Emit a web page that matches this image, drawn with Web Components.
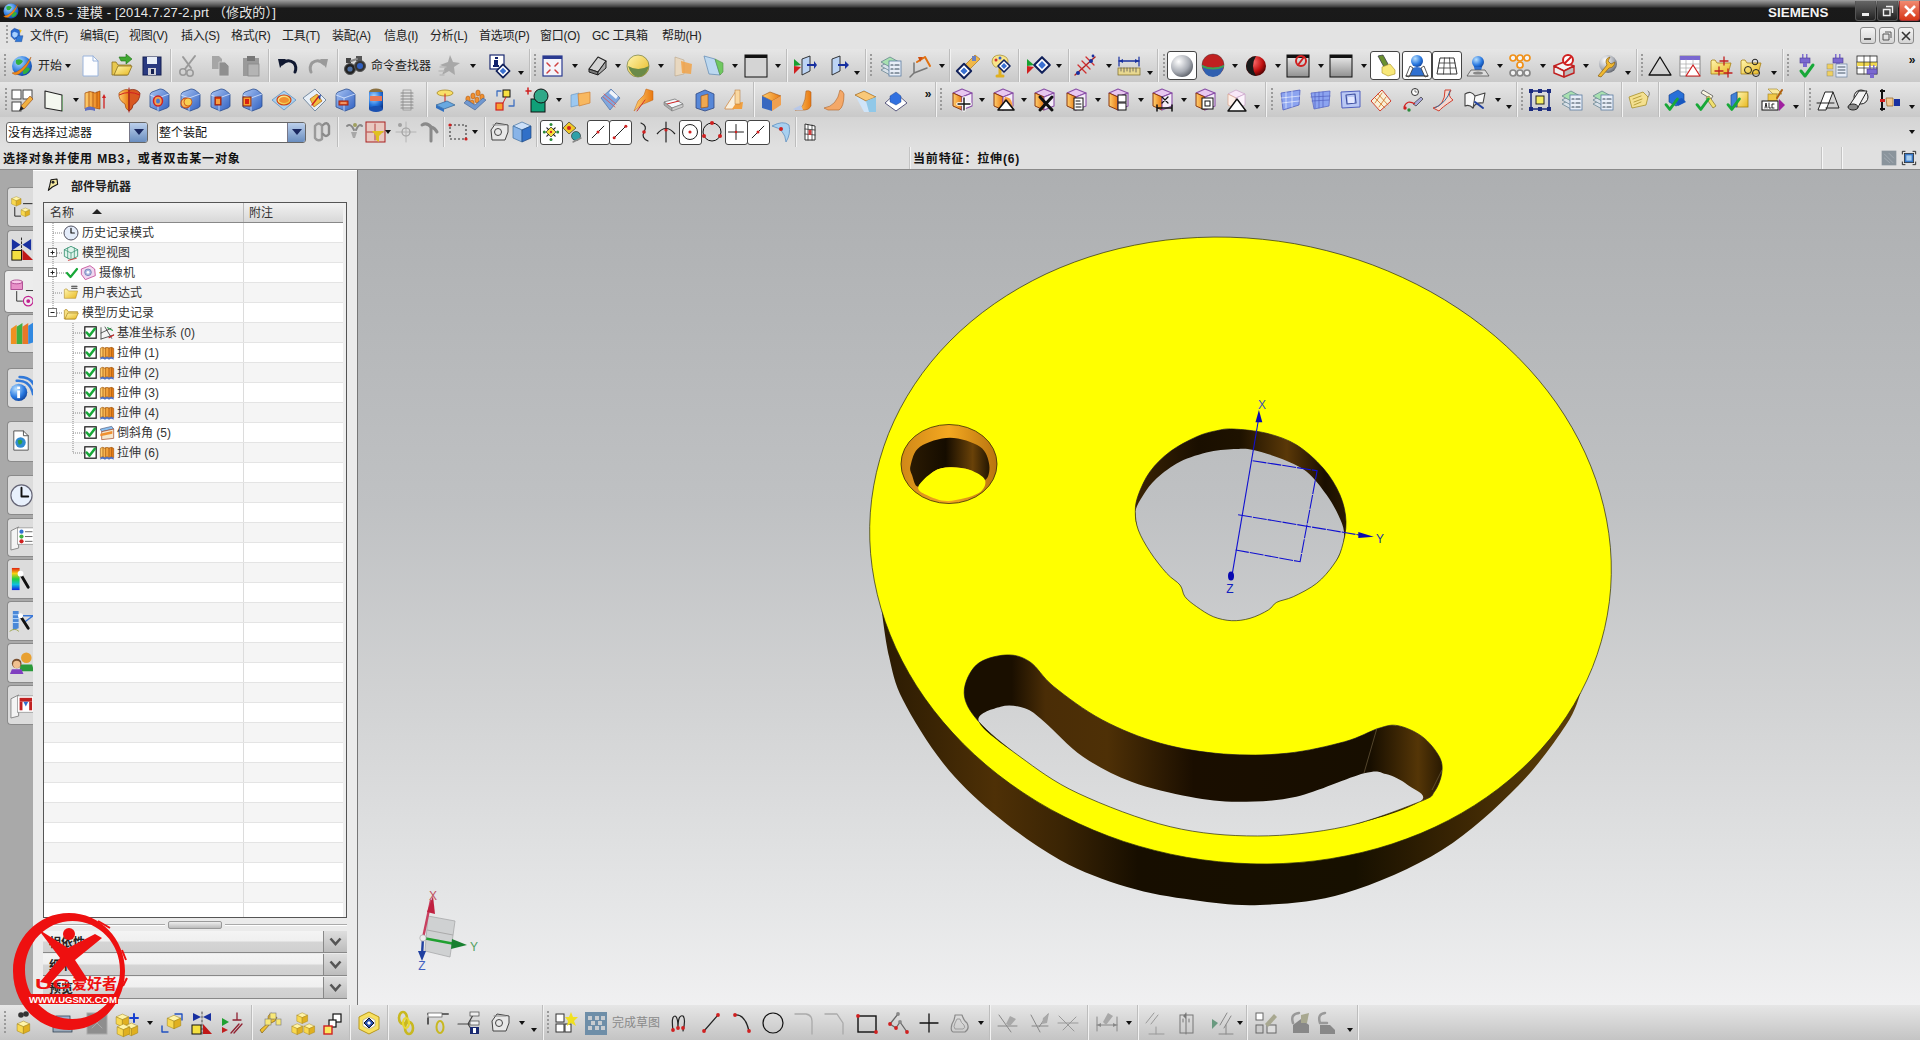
<!DOCTYPE html>
<html><head><meta charset="utf-8"><title>NX 8.5</title>
<style>html,body{margin:0;padding:0;background:#ccc;overflow:hidden}
body{font:12px "Liberation Sans","Noto Sans CJK SC",sans-serif}</style></head>
<body>
<nx-app></nx-app>
<script>
const FF='"Liberation Sans","Noto Sans CJK SC",sans-serif';
const R=(x,y,w,h,f,s='none',sw=1)=>`<rect x="${x}" y="${y}" width="${w}" height="${h}" fill="${f}" stroke="${s}" stroke-width="${sw}"/>`;
const G=(p,f,s='none',sw=1)=>`<polygon points="${p}" fill="${f}" stroke="${s}" stroke-width="${sw}" stroke-linejoin="round"/>`;
const F=(d,f,s='none',sw=1)=>`<path d="${d}" fill="${f}" stroke="${s}" stroke-width="${sw}" stroke-linejoin="round"/>`;
const L=(d,s='#000',sw=1)=>`<path d="${d}" fill="none" stroke="${s}" stroke-width="${sw}" stroke-linecap="round" stroke-linejoin="round"/>`;
const C=(x,y,r,f,s='none',sw=1)=>`<circle cx="${x}" cy="${y}" r="${r}" fill="${f}" stroke="${s}" stroke-width="${sw}"/>`;
const E=(x,y,a,b,f,s='none',sw=1)=>`<ellipse cx="${x}" cy="${y}" rx="${a}" ry="${b}" fill="${f}" stroke="${s}" stroke-width="${sw}"/>`;
const T=(x,y,k,c)=>`<g transform="translate(${x} ${y}) scale(${k})">${c}</g>`;
const DEFS=`<defs>
<linearGradient id="b" x1="0" y1="0" x2="1" y2="1"><stop offset="0" stop-color="#a8c4f4"/><stop offset="1" stop-color="#2f5fc0"/></linearGradient>
<linearGradient id="y" x1="0" y1="0" x2="1" y2="1"><stop offset="0" stop-color="#fff6b0"/><stop offset="1" stop-color="#e8b820"/></linearGradient>
<linearGradient id="o" x1="0" y1="0" x2="1" y2="0"><stop offset="0" stop-color="#ffd070"/><stop offset="1" stop-color="#e87810"/></linearGradient>
<linearGradient id="g" x1="0" y1="0" x2="0" y2="1"><stop offset="0" stop-color="#efefef"/><stop offset="1" stop-color="#909090"/></linearGradient>
<radialGradient id="s" cx=".35" cy=".3" r=".8"><stop offset="0" stop-color="#fff"/><stop offset=".6" stop-color="#a8acb4"/><stop offset="1" stop-color="#50545c"/></radialGradient>
<radialGradient id="bs" cx=".35" cy=".3" r=".8"><stop offset="0" stop-color="#b8e0ff"/><stop offset=".6" stop-color="#2878e0"/><stop offset="1" stop-color="#0c3a90"/></radialGradient>
<radialGradient id="rs" cx=".35" cy=".3" r=".8"><stop offset="0" stop-color="#ff7070"/><stop offset=".6" stop-color="#c01010"/><stop offset="1" stop-color="#300"/></radialGradient>
</defs>`;
const ycube=(x=0,y=0,k=1)=>T(x,y,k,G('12,3 21,7 12,11 3,7','#fff4a8','#a08010',.7)+G('3,7 12,11 12,21 3,17','#f8d850','#a08010',.7)+G('21,7 12,11 12,21 21,17','#e0b020','#a08010',.7));
const blue=f=>F('M3 7Q3 5 5 4L13 1Q15 1 17 2L22 6V18Q22 19 20 20L12 23Q11 23 10 22L3 19Z','url(#b)','#2c4f90',.8)+L('M3 7L11 10L22 6M11 10V23','#dbe8ff',.8)+f;
const purple=f=>G('12,1 22,5 12,9 3,5','#e8c8f0','#8a50a8',1.1)+G('3,5 12,9 12,22 3,18','url(#o)','#8a3810',1)+G('22,5 12,9 12,22 22,18','#f4ecf8','#8a50a8',1.1)+f;
const triGR='<polygon points="1,5 8,11 1,12" fill="#18a030"/><polygon points="1,12 8,13 1,20" fill="#d02020"/>';
const diam=(x,y,k=1)=>T(x,y,k,G('0,-6 6,0 0,6 -6,0','#fff','#10205a',1.6)+G('0,-3 3,0 0,3 -3,0','#3a70d0'));
const door=G('9,5 17,2 17,17 9,21','#bcd4f4','#222',.9);
const plug=(x,y)=>T(x,y,1,R(2,0,1.5,4,'#8070d0')+R(6,0,1.5,4,'#8070d0')+R(0,4,10,5,'#7a68d0','#4a3a90',.6)+R(3,9,4,4,'#7a68d0'));
const chk=(x,y,k=1)=>T(x,y,k,L('M0 6L4 11L12 0','#18a838',3));
const folder=(c='url(#y)')=>F('M2 7V20H19L22 9H8L6 6H3Z',c,'#a88018',.8);
const doc=(f='#fff',s='#7a9ad0')=>F('M5 2H15L20 7V22H5Z',f,s,1)+L('M15 2V7H20',s);
const I={
nxm:G('8,2 16,5 16,15 8,19 3,14 3,6','#2a6ad0','#103880',.6)+G('8,7 13,9 13,14 8,16 5,13 5,9','#a8d0ff')+G('13,13 21,13 19,22 9,22','#3078d8','#103880',.5)+G('15,3 19,5 17,9','#f0c020'),
start:C(12,12,10,'url(#bs)')+F('M6 6Q10 4 13 7Q11 11 8 11Q5 10 6 6ZM13 14Q18 12 20 15Q17 21 13 20Z','#30b040')+F('M2 19Q12 18 21 3Q19 13 9 20Q5 22 2 19Z','#f08818','#a04808',.4),
new:doc('#fcfdff','#9ab4dc'),
open:F('M3 8V21H18L22 11H9L7 8Z','#e8c850','#8a7020',.8)+F('M5 21L9 12H23L19 21Z','url(#y)','#8a7020',.8)+F('M10 3H17V0L23 5L17 10V7H12Z','#40a830','#207018',.6),
save:R(3,3,18,18,'#2a3a80','#141f50')+R(7,3,10,7,'#e8eef8')+R(8,14,8,7,'#d0d0d8')+R(11,15,3,5,'#141f50'),
cut:L('M18 2L8 15M6 3L14 14','#9a9a9a',2)+C(6,18,3.2,'none','#9a9a9a',1.6)+C(13,19,3.2,'none','#9a9a9a',1.6),
copy:F('M4 2H11L14 5V15H4Z','#a6a6a6')+F('M11 8H17L21 12V22H11Z','#8f8f8f','#d4d4d4',.8),
paste:R(4,4,16,18,'#9a9a9a')+R(8,2,8,5,'#777')+R(9,10,11,12,'#b4b4b4','#888',.8),
undo:L('M6 10Q12 4 18 9Q21 13 19 18','#101830',3)+G('2,5 10,5 4,14','#101830'),
redo:L('M18 10Q12 4 6 9Q3 13 5 18','#9a9a9a',3)+G('22,5 14,5 20,14','#9a9a9a'),
binoc:C(7,15,5.5,'#222','#555')+C(17,12,5.5,'#333','#555')+C(17,12,3,'#3060c0')+C(7,15,2.6,'#5070a0')+R(3,4,5,5,'#444')+R(13,2,6,5,'#555')+L('M8 7L14 5','#888',2),
find:G('13,1 16,8 23,9 17,13 18,21 12,17 5,21 8,13 3,11 11,8','#a8a8a8')+L('M3 13H9M2 17H7M3 21H7','#bbb',1.4),
info:R(2,1,14,14,'#fff','#1a2870',1.2)+R(7,3,3,2,'#10206a')+R(6,6,4,6,'#10206a')+R(5,11,6,2,'#10206a')+diam(15,17,1.1),
fit:R(3,2,19,20,'#f4f4fa','#2a3a90',1.2)+R(3,2,19,3,'#2a3a90')+L('M7 9L10 12M18 9L15 12M7 19L10 16M18 19L15 16','#d04040',1.5),
shape:F('M3 15L12 3L20 7L12 18Z','#d4d4d4','#222',1.2)+F('M3 15L12 18V21L3 18Z','#777','#222',1)+F('M12 18L20 7V14L12 21Z','#aaa','#222',1),
ball:C(10,12,11,'url(#y)','#5a6a30',.6)+F('M0 12Q10 18 21 12Q18 23 10 23Q3 22 0 12Z','#6a8a48'),
oran:G('5,3 14,6 14,20 5,22','#e8d8c0','#b8a488',.6)+G('11,7 22,10 21,20 12,19','#f2a040cc'),
pane:G('3,2 14,5 19,21 8,20','#bcd8f0','#6a90b8',.8)+G('14,5 22,9 22,18 19,21','#70c860','#509048',.6),
blk:R(1,1,22,22,'#d4d4d4','#111',1)+R(1,1,22,3,'#111'),
door1:triGR+door+G('14,10 21,10 21,7 24,11 21,15 21,12 14,12','#1830a0'),
door2:T(-3,0,1,door)+G('12,10 19,10 19,7 23,11 19,15 19,12 12,12','#1830a0'),
layers:[16,12,8].map(y=>G(`3,${y} 12,${y-5} 21,${y} 12,${y+5}`,y==8?'#a8e0b0':'#d8e0e8','#5a7a88',.7)).join('')+R(11,7,12,15,'#e8eef8','#5a7aa0',.8)+L('M13 11H15M17 11H21M13 15H15M17 15H21M13 19H15M17 19H21','#345',1.2),
wcs:L('M6 19V9M6 19L19 14M6 19L2 23','#777',1.5)+L('M9 8L17 3M17 3L22 12','#e07010',2)+F('M10 3L15 3L12 8Z','#d05010'),
wand:G('8,11 18,1 23,5 13,15','#f0b848','#a06810',.6)+R(15,2,4,5,'#6a80c0')+diam(7,17,1.2),
paint:F('M5 8Q5 1 13 1Q22 2 21 9Q20 12 16 12Q12 12 10 13Q7 14 5 8Z','#f8e488','#a08828',.7)+C(9,6,1.5,'#d03030')+C(13,4,1.5,'#3060d0')+L('M13 13V20M10 22H16','#e0b020',3)+diam(17,12,1),
tridia:triGR+diam(16,11,1.3),
hatch:L('M2 21L22 3','#b02020',1.4)+L('M5 11L13 19M9 7L17 15M13 3L21 11','#d03030',1.3)+C(5,19,2,'#1830a0')+C(18,7,2,'#1830a0')+C(20,2,1.4,'#1830a0'),
ruler:R(1,14,22,7,'#e8d890','#7a6820',.7)+L('M4 14V17M7 14V18M10 14V17M13 14V18M16 14V17M19 14V18','#555',.8)+L('M2 7H22','#1830a0',1.3)+L('M2 3V12M22 3V12','#1830a0',1.2)+G('2,7 6,5 6,9','#1830a0')+G('22,7 18,5 18,9','#1830a0'),
sphere:C(12,12,11,'url(#s)'),
redblue:C(12,11,11,'#c02020','#333',.4)+F('M1 11Q12 17 23 11Q21 23 12 23Q3 23 1 11Z','#3060b0')+F('M1 11Q12 16 23 11V13Q12 18 1 13Z','#40a050'),
redball:C(12,12,10,'url(#rs)')+F('M12 2A10 10 0 0 0 12 22Q6 12 12 2Z','#1a1a1a'),
nobox:R(1,1,22,22,'url(#g)','#111')+R(1,1,22,3,'#111')+C(15,7,5,'none','#d02020',2)+L('M12 11L18 3','#d02020',2),
gradbox:R(1,1,22,22,'url(#g)','#111')+R(1,1,22,3,'#111'),
bulb:L('M7 2L13 9','#333',1)+G('5,2 10,1 15,10 11,13','#6a9030','#334',.7)+F('M9 13L17 10L22 16V20L15 22L9 19Z','#f8e878','#a89020',.6),
person:C(12,7,6,'url(#bs)')+F('M5 22L6 15Q12 11 18 15L20 22Z','#2f70d0')+F('M1 22L5 12L8 14L4 23ZM23 22L19 12L16 14L20 23Z','#fff','#333',.8)+L('M1 22H23','#333'),
grid:G('5,4 19,4 22,20 2,20','#fff','#333',1)+L('M9.5 4L8.5 20M14.5 4L15.5 20M4 9H20M3 14H21','#333',.8),
person2:C(12,8,6,'url(#bs)')+F('M8 13H16L15 17H9Z','#2f70d0')+G('5,16 19,16 23,22 1,22','#ddd','#555',.8)+E(12,19,5,1.6,'#888'),
circles:[[5,4,'#f09018'],[12,4,'#f09018'],[19,4,'#f09018'],[12,11,'#f09018'],[5,19,'#888'],[12,19,'#888'],[19,19,'#888']].map(a=>C(a[0],a[1],3,'#f4f4f4',a[2],1.7)).join(''),
redbox:G('12,8 22,12 12,17 2,12','#f4f4f4','#c02020',1.4)+G('2,12 12,17 12,23 2,19','#eee','#c02020',1.4)+G('22,12 12,17 12,23 22,19','#bbb','#c02020',1.4)+C(16,6,5,'#fff','#d02020',2)+L('M13 9L19 3','#d02020',2),
wrenchb:C(13,10,9,'url(#s)')+F('M3 22L12 11Q9 5 15 3L13 7L16 10L20 8Q19 14 14 14L6 23Z','#f0b830','#8a6010',.7),
tri:G('12,3 23,21 1,21','none','#111',1.3),
table:R(2,2,20,20,'#fff','#666',.7)+R(2,2,20,4,'#7a68d0')+L('M2 10H22M2 14H22M2 18H22M8 6V22M15 6V22','#aaa',.7)+G('15,11 22,22 8,22','#fff','#d02020',1.2),
fplus:folder()+L('M15 3V11M11 7H19M10 13V21M6 17H14M19 15V23M15 19H23','#c02020',1.3),
fcirc:folder()+C(9,16,3.5,'none','#222')+C(17,19,3.5,'none','#222')+C(16,8,2.8,'none','#222'),
plugok:plug(6,0)+chk(7,11),
plugtree:plug(8,0)+R(2,10,6,5,'#f0d060','#887',.5)+R(2,17,6,5,'#f0d060','#887',.5)+R(11,10,11,13,'#e8eef8','#6a80a0',.7)+L('M13 13H20M13 16H20M13 19H20','#456',1),
tabplug:R(1,2,20,18,'#fff','#222',.8)+R(1,8,20,4,'#f0d850')+L('M1 8H21M1 14H21M8 2V20M14 2V20','#222',.7)+plug(11,11),
sketch:R(2,2,9,9,'#fff','#444')+R(2,14,9,9,'#fff','#444')+R(13,2,9,9,'#fff','#444')+G('11,18 20,8 23,11 14,21','#f0b040','#904010',.6)+G('9,23 11,18 14,21','#222'),
plane:G('3,3 20,7 20,23 3,20','#f4f8f0','#222',1.1)+G('20,7 21,8 21,23 20,23','#70a070'),
extrude:F('M1 5Q6 2 11 5L16 3V21L11 20Q6 18 1 21Z','url(#o)','#a04808',.7)+L('M5 4V19M9 4V19M13 4V19','#a04808',.7)+F('M1 20Q6 17 11 20V23Q6 21 1 23Z','#6070c0')+L('M20 20V9','#d02020',1.3)+G('20,6 18,10 22,10','#d02020'),
revolve:F('M2 5Q8 0 12 2V23Q8 21 8 16Q1 12 2 5Z','url(#o)','#a04808',.7)+F('M12 2Q19 0 23 5Q23 13 16 17Q16 21 12 23Z','#d85820','#802008',.7)+L('M12 0V24','#b02020',1)+F('M2 7Q12 2 23 7','none','#d02020'),
bhole:blue(E(11,13,4.5,5,'#f0a050','#d02020',1.5)+E(11,13,2,2.5,'#4a78d0')),
bboss:blue(E(8,15,5,5,'url(#o)','#c04010',1)+E(10,14,4,4,'#f8d050','#c04010',.7)),
bpock:blue(R(7,9,6,8,'#e04010','#902010')+R(8,11,4,5,'#f8a040')),
bpad:blue(R(3,9,8,9,'#f8a030','#802010')+R(5,11,4,5,'#d82010')),
emb:G('12,3 24,12 12,22 0,12','#a8d0f0','#6090c0',.8)+E(12,12,7,5,'url(#y)','#d04010',1.2)+E(12,12,5,3,'#f09030'),
offs:F('M1 10L13 1L24 12L13 23Z','#e8f0f8','#6a8098',.9)+F('M8 11L15 6L20 13L12 19Z','#f0c040','#b06010',.7)+L('M10 17L17 8','#d02020',1.4)+G('16,9 19,6 18,12','#2040a0'),
slot:blue(R(6,13,9,4,'#e05828','#a02010')+L('M8 15H13','#ffd0a0',1.2)),
cyl:E(12,4,7,3.5,'#8a7040')+R(5,4,14,17,'url(#bs)')+E(12,21,7,3,'#1a50b0')+R(6,8,12,5,'#e87858'),
spring:R(8,2,8,20,'#ddd','#888',.7)+L('M6 5H18M6 8H18M6 11H18M6 14H18M6 17H18M6 20H18','#888',1.1),
trim:E(12,5,8,3,'#f8e068','#a88820',.8)+L('M12 6V15','#d02020',1)+G('3,17 14,13 22,17 11,21','#68a8e0','#306090',.7)+G('3,17 11,21 11,24 3,20','#3070c0'),
array:[[5,11],[10,8],[15,5],[9,15],[14,12],[19,9]].map(a=>E(a[0],a[1],2.2,3,'#f09030','#a05010',.5)).join('')+G('1,15 12,22 23,12 20,10 12,17 4,12','#7098d0','#406090',.6),
copyf:R(9,2,7,7,'#f8e040','#111')+R(2,15,7,7,'#f8a030','#d02020',1.2)+L('M3 8V3H7M20 12V18H15','#4070c0',1.3)+L('M9 15L12 9','#d02020',1),
combine:R(5,11,14,13,'#10a078','#111')+C(15,8,7,'#30a888','#111')+L('M2 0V6M0 3H5','#d02020',1.5),
trimb:G('3,7 11,5 11,17 3,19','#9cc8f0','#6090c0',.6)+G('10,6 22,4 22,15 11,18','#f8b860','#d08030',.7),
edgeb:G('3,10 13,1 22,10 12,22','#80a8e0','#5070a0',.7)+L('M6 6L18 16M5 9L17 19','#e05050',.8)+G('13,2 20,8 18,11 11,5','#f0f4fa'),
trbl:F('M3 23L7 13L13 7L15 1L22 3V12L10 17Z','url(#o)','#c06010',.5)+L('M6 23L14 12','#d03030'),
rhomb:G('3,14 14,11 22,16 11,20','#f4f8fc','#777',.8)+L('M6 16L18 13','#d02020',1)+G('3,14 11,20 11,23 3,17','#aaa','#777',.6)+G('22,16 11,20 11,23 22,19','#ccc','#777',.6),
boxcut:G('3,6 12,2 21,6 21,20 12,23 3,20','#5888d8','#304880',.8)+G('8,8 15,6 15,19 8,20','#f0a850','#904810',.6),
chair:F('M3 20L14 3H17V16L12 21H3Z','#f8f0e0','#d08030',.7)+F('M10 21L14 15L21 14L20 21Z','#f0a040')+R(13,2,5,14,'#fad8a0','#b07030',.5),
sq3d:G('3,8 11,4 22,8 13,13','url(#o)','#a05010',.6)+G('3,8 13,13 13,23 3,20','#3868c0')+G('22,8 13,13 13,23 22,17','#f0a050'),
curved:F('M4 22Q14 22 15 3Q18 2 20 4V18Q18 22 14 22Z','url(#o)','#b06020',.6)+F('M2 21L10 17L12 22H4Z','#b8c8e8'),
curved2:F('M2 20Q15 18 18 2Q21 3 22 6Q22 19 17 22H6Z','#f4a868','#b06020',.6),
slab:G('3,7 12,1 24,7 24,24 12,24','#cfe4f8')+G('3,7 12,3 24,9 14,13','#f8c878','#a06010',.7)+G('14,13 24,9 24,24 17,24','#90c8e8'),
pyr:G('1,15 12,5 23,15 12,23','#fff','#5a5a80',1)+G('6,8 12,4 17,8 17,14 12,17 6,14','#3070e0','#204080',.4),
pmove:purple(L('M14 10V22M8 16H20','#fff',3.6)+L('M14 10V22M8 16H20','#111',1.4)),
pdel:purple(F('M10 21L14 9Q20 9 21 15L22 21Z','#f8a040')+G('15,12 23,22 7,22','#fff','#111',1.6)),
px:purple(L('M8 9L20 22M20 9L8 22','#111',3)),
pcopy:purple(R(10,10,9,12,'#fff','#111')+L('M12 13H16M12 16H17M12 19H17','#111',1)),
psplit:purple(R(12,7,8,7,'#fff','#111')+R(12,15,8,7,'#fff','#111')),
pdim:purple(L('M7 20H22M7 17V23M22 17V23','#111',1.5)+L('M12 9L18 15M18 9L12 15','#111',1.2)),
pbox:purple(R(9,10,11,11,'#fff','#111')+R(12,13,5,5,'none','#111')),
ptri:G('12,2 21,6 12,10 4,6','#f8e8f8','#c8a0c8',.7)+G('4,6 12,10 12,21 4,17','#fdf0ea','#d8a088',.7)+G('21,6 12,10 12,21 21,17','#fcf4fc','#c8a0c8',.7)+G('13,11 22,23 4,23','#fff','#111',1.4),
srf1:F('M3 5L22 2L21 17L5 22Z','#8ca4f0','#5060c0',.8)+L('M8 4V20M14 3V19M3 10L22 8M4 15L21 13','#fff',.6),
srf2:F('M3 5L22 3L21 18L6 21Z','#8ca4f0','#5060c0',.7)+L('M7 5V20M11 4V20M15 4V19M3 9L22 8M4 13L21 12','#5060c0',.7),
srf3:F('M3 4L22 3L22 19L4 20Z','#bac8f4','#5060c0',1)+F('M8 7L17 6L18 15L9 16Z','none','#4050a0',1.2)+F('M10 9H16V15H10Z','#e4e8ff'),
srf4:F('M2 13L13 2L22 13L11 23Z','#f8f0d8','#d04030',1)+L('M6 10L16 20M9 6L19 17M13 5L6 15M17 9L10 19','#d07020',.8),
gauge:C(14,4,3.5,'#fff','#333')+L('M14 2V4H16','#333',.6)+G('12,16 20,9 22,11 15,18','#a8a8d8','#333',.7)+F('M3 19Q6 11 14 16','none','#d02020',1.2)+C(4,20,1.7,'#d02020')+C(8,22,1.7,'#2a8a3a'),
ribbon:F('M2 20Q14 18 14 2H20Q16 8 22 12Q10 20 8 23Z','#f4d8d0','#d04030',1)+L('M4 20Q16 14 19 3','#3070a0',1),
book:F('M2 6Q8 2 12 8L22 5L20 15Q12 14 10 20Q6 16 2 18Z','#f8f8f8','#444',1.1)+L('M12 8L10 20','#444')+L('M12 14L20 20','#2040a0',2),
frame:R(3,3,18,18,'none','#1a2a80',1.5)+R(8,8,8,8,'#f4ec60','#222')+[[3,3],[21,3],[3,21],[21,21],[12,3],[12,21]].map(a=>R(a[0]-2,a[1]-2,4,4,'#1a2a80')).join(''),
tag:F('M2 9L16 4L21 9L19 17L5 20Z','#f4e090','#a89028',.8)+L('M6 11L14 8M7 14L15 11M7 17L14 14','#a89028',.8)+L('M21 9Q24 5 21 3','#666',.8),
chk1:G('5,7 14,2 20,6 20,14 12,18 5,14','#2870d8','#103880',.6)+G('10,12 18,10 22,14 14,18','#1858c0')+chk(2,11,.95),
chk2:G('8,2 18,8 16,11 6,5','#f8f4e0','#555',.8)+G('14,8 21,18 18,20 11,10','#f0e070','#706010',.6)+chk(2,11,.95),
chk3:R(11,4,11,15,'url(#y)','#a08010',.8)+G('5,7 11,4 11,19 5,19','#4080d8','#1a4890',.7)+chk(2,11,.95),
abc:G('7,1 16,1 21,6 12,6','#f8e8a0','#a08020',.6)+R(7,6,9,7,'#f0c848','#a08020',.6)+L('M16 10L21 2','#b06010',2)+R(1,13,16,9,'#fff','#111')+L('M4 20L5 15L6 20M8 15V20H10M13 16H11V20H13','#111',.9)+G('18,11 24,17 18,23','#a020a0'),
pr1:G('2,22 9,4 17,4 10,22','#fff','#222',1)+L('M1 15H18M17 4L23 20H10','#222',1),
pr2:E(14,9,7,7,'#eee','#222',1)+G('2,18 12,3 20,3 10,21','#f4f4f4','#222',1)+E(6,19,5,3,'#888','#222'),
hand:L('M4 2V22','#111',2)+R(2,2,5,2,'#111')+R(2,11,5,3,'#d02020')+R(2,20,5,2,'#111')+F('M8 10H15V18H9Z','#f0c890','#906020',.7)+R(16,11,6,7,'#1830a0'),
link:L('M5 6Q9 1 12 6V19Q8 22 5 18Z','#9a9a9a',2.4)+L('M13 5Q17 1 19 6V14Q16 18 13 14','#8a8a8a',2.4),
gfun:G('8,12 14,12 12,18 10,18','#a8a8a8')+L('M4 6Q8 3 11 10M19 6Q16 3 13 10','#888',2)+C(12,5,2,'#a0a060'),
fil:R(3,2,19,20,'#e8c8c0','#a82020',1)+L('M4 12H20M12 4V20','#a82020',.8)+G('9,11 21,11 16,16 16,22 13,20 13,16','#e0c020'),
cross:L('M12 2V22M2 12H22','#b4b4b4',1)+C(12,12,4,'none','#a0a0a0',1.2)+C(6,5,2,'#a0a0a0'),
pipe:L('M5 5Q10 2 14 7V21','#8a8a8a',3)+L('M14 7Q18 8 20 12','#8a8a8a',3),
dashbox:R(4,5,16,14,'none','#333',1.1).replace('/>',' stroke-dasharray="2 2"/>')+C(4,5,1.6,'#d02020')+C(20,19,1.6,'#d02020'),
sbox1:G('3,10 8,3 20,5 20,12 17,20 4,20','#e8e8e8','#444',1)+C(10,12,3.5,'none','#444')+L('M5 5H17','#888'),
sbox2:G('12,2 21,6 12,10 3,6','#cce0f8','#4070a0',.7)+G('3,6 12,10 12,22 3,18','#88b4e8','#4070a0',.7)+G('21,6 12,10 12,22 21,18','#3070c8','#204880',.7),
snap:[[12,3],[4,12],[20,12],[12,21]].map(a=>C(a[0],a[1],1.8,'#2a8a3a')).join('')+G('12,6 18,12 12,18 6,12','#f8e040','#222',.8)+C(12,12,1.4,'#d02020')+L('M7 7L9 9M17 7L15 9M7 17L9 15M17 17L15 15','#222',1.4),
snap2:G('8,2 15,8 8,14 2,8','#f0c828','#222',.6)+C(8,8,2,'#d02020')+C(15,16,4.5,'#30a0a8','#222',.6)+L('M20 18L12 22','#888',1.4),
seg:L('M5 19L19 5','#222',1.2)+C(12,12,1.8,'#d02020'),
seg2:L('M5 19L19 5','#222',1.2)+C(19,5,1.8,'#d02020')+C(5,19,1.8,'#d02020'),
curv:L('M7 3Q14 6 10 12Q7 18 14 21','#222',1.2)+C(10,12,1.8,'#d02020'),
umb:F('M3 14Q12 3 21 14','none','#222',1.2)+L('M12 2V22','#222',1.2)+C(12,10,1.6,'#d02020'),
ccir:C(12,12,9,'none','#222',1.2)+C(12,12,1.9,'#d02020'),
cdot:C(12,12,9,'none','#111',1)+C(12,3,2,'#d02020')+C(4,16,2,'#d02020')+C(20,16,2,'#d02020'),
plusm:L('M12 3V21M3 12H21','#222',1.2)+C(12,12,1.5,'#d02020'),
sph:F('M3 6Q14 0 20 5Q22 14 17 22Q16 9 3 6Z','#a8d0f0','#6090c0',.8)+C(12,9,2,'#d02020'),
mesh:G('7,4 17,6 17,20 7,20','#fff','#333',1)+L('M7 9L17 10M7 14L17 15M10 5V20M14 5V20','#333',.8)+R(10.5,10,3,5,'#d04040'),
yfind:C(10,4,2.8,'#333')+C(15,3,2.8,'#333')+ycube(4,8,.7),
cam:R(5,5,14,13,'#9eb0d0','#345',.8)+R(2,15,19,6,'#9ab','#234',.7),
gray:R(2,2,20,21,'#8e8e8e','#aaa',1)+L('M7 7L17 17M17 7L7 17','#aaa',1),
ycadd:ycube(-1,1,.7)+ycube(8,10,.7)+ycube(0,11,.7)+L('M19 3V11M15 7H23','#1840d0',2),
ycmove:ycube(5,2,.75)+L('M2 21V15M2 21H8M15 3H22V9','#2050c0',1.4),
mir:G('3,2 11,6 3,10','#1830a0')+G('21,2 13,6 21,10','#1830a0')+L('M12 1V23','#222',.8).replace('/>',' stroke-dasharray="2 2"/>')+R(2,14,9,9,'#f4e040','#111')+G('13,13 22,23 13,23','#c01818'),
peril:G('2,7 9,11 2,15','#20a030')+G('2,16 8,19 2,22','#c02020')+L('M17 2V9M13 9H21M11 22L19 13M14 22L22 13','#902030',1.3),
wplus:F('M2 19L11 11Q8 4 14 2L12 6L15 8L19 6Q18 11 13 12L4 22Z','#f0c030','#806010',.7)+R(12,2,6,6,'#f8e878','#777',.6)+R(18,8,5,6,'#f8e878','#777',.6)+R(7,8,6,6,'#f8e878','#777',.6),
y3:ycube(5,0,.6)+ycube(0,11,.6)+ycube(12,11,.6),
stair:R(12,3,8,8,'#fff','#111',1.2)+R(8,9,7,7,'#fff','#111',1.2)+R(3,15,8,8,'#fce860','#d02020',1.4),
hex:G('12,1 22,6 22,18 12,23 2,18 2,6','#f8e060','#b89818',1)+G('12,6 18,9 18,15 12,18 6,15 6,9','#fff','#999',.6)+G('12,7 17,12 12,17 7,12','#2850b0','#112',1)+G('12,10 14,12 12,14 10,12','#fff'),
chain:E(9,7,4,6,'none','#c8b820',2.6)+E(15,17,4,6,'none','#c8b820',2.6)+E(12,12,3,5,'none','#e8d830',2.2),
weld:L('M3 3H23','#666',2)+R(3,2,14,4,'#fff','#555',.7)+L('M3 7V13','#222',1.4)+E(15,16,3.5,6,'none','#c8b820',2),
tree:L('M12 13H2M12 13L17 4M12 13L17 13M12 13L17 21','#444',1.2)+R(14,1,9,4,'#eee','#444',.7)+R(14,10,9,4,'#eee','#444',.7)+R(14,16,9,7,'#1a2a70')+R(17,17,3,5,'#fff'),
sqstar:R(2,3,8,8,'#fff','#333')+R(2,13,8,8,'#fff','#333')+R(11,13,6,8,'#fff','#333')+G('17,1 19,6 24,6 20,10 22,15 17,12 13,15 14,10 11,6 15,6','#f0e020'),
flag:R(1,1,22,23,'#6e8ea8')+[[4,5],[11,5],[7,10],[14,10],[4,15],[11,15],[17,5],[17,15]].map(a=>R(a[0],a[1],4,4,'#c8ccd0')).join(''),
spl:L('M5 19Q3 5 7 5Q10 6 10 17M10 17Q10 3 15 5Q18 8 15 20','#222',1.2)+C(5,19,1.9,'#d02020')+C(10,17,1.9,'#d02020')+C(15,17,1.9,'#d02020'),
line:L('M5 20L19 4','#222',1.2)+C(19,4,1.9,'#d02020')+C(5,20,1.9,'#d02020'),
arc:L('M5 4Q15 3 19 20','#222',1.3)+C(5,4,1.9,'#d02020')+C(19,20,1.9,'#d02020'),
circ:C(12,12,10,'none','#111',1.2),
fil1:L('M3 3H14Q20 4 20 10V23','#aaa',1.3),
fil2:L('M3 3H15L21 12V23','#aaa',1.3),
rect:R(4,5,18,16,'none','#111',1.4)+C(4,5,1.9,'#d02020')+C(22,21,1.9,'#d02020'),
poly:L('M12 3L4 13L10 17L14 11L21 21','#666',1.3)+C(12,3,1.9,'#888')+C(4,13,1.9,'#d02020')+C(10,17,1.9,'#d02020')+C(14,11,1.9,'#888')+C(21,21,1.9,'#d02020'),
plusb:L('M12 3V21M3 12H21','#111',1.3),
offc:F('M8 4H15Q17 10 20 12Q23 18 18 21H6Q3 20 5 13Q8 8 8 4Z','none','#888',1.2)+F('M10 8H13Q14 12 17 14Q19 17 16 18H8Q6 16 8 12Z','none','#999',.9),
gl1:L('M3 4L15 21M2 15H21','#888',1)+G('14,5 20,8 14,15 10,13','#a8a8a8'),
gl2:L('M3 4L12 21M4 15H20M20 3L11 16','#888',1)+G('15,7 21,2 19,12 14,13','#a8a8a8'),
gl3:L('M3 5L18 20M20 6L7 19M2 12H22','#999',1),
dim:L('M2 6V20M22 6V20M2 14H22','#888',1)+G('2,14 6,12 6,16','#888')+G('22,14 18,12 18,16','#888')+G('13,2 18,5 11,14 8,11','#a8a8a8'),
pll:L('M2 12L10 2M7 13L14 4M12 16V23M5 23H20','#999',1),
pil:R(5,4,13,18,'none','#777')+L('M11 2V23M8 8V11M14 8V11','#777')+G('8,5 11,2 11,8','#777'),
tri2:G('1,8 7,12 1,18','#6a9a80')+L('M16 2L9 14M20 5L13 17M15 14V23M8 23H22','#888',1),
sqw:R(2,2,7,7,'#fff','#666')+R(2,14,7,8,'#ccc','#666')+R(13,14,9,8,'#ddd','#666')+G('11,13 20,3 23,6 14,16','#a8a890'),
gc1:L('M12 2Q3 3 6 12','#999',2.5)+G('6,14 14,8 22,14 22,22 6,22','#888')+G('14,4 22,2 20,12 14,12','#a8a890'),
gc2:L('M10 2Q2 3 5 12H12','#999',2.5)+G('5,14 15,14 20,19 20,23 5,23','#888'),
pin:F('M9 4L18 3L19 11L11 15L5 20L7 13Z','#f4e8a0','#111',1.6)+C(12,8,2.2,'#222'),
clock:C(12,12,10.5,'#e4ecfa','#445',1.4)+L('M12 5V12H17','#111',1.8),
mview:G('12,2 22,7 22,17 12,22 2,17 2,7','#e0f4ec','#2a8a68',1.2)+L('M2 7L12 12L22 7M12 12V22M7 4.5V19.5M17 4.5V19.5','#2a8a68',1)+L('M8 23L20 20','#d04040',1.4),
check:L('M2 12L9 20L22 4','#18a838',4.4),
camera:G('2,6 15,1 22,6 23,16 8,22 2,14','#f0d8f0','#c04090',1.2)+C(12,11,5,'#a8b8e0','#6070a8')+C(12,11,2,'#fff'),
uexp:folder()+L('M13 2H21M13 5H21','#333',1.6),
fopen:F('M2 8V21H18L22 10H8L6 7H3Z','#f8e080','#a88018',1)+F('M3 21L7 12H23L19 21Z','url(#y)','#a88018',1),
cbox:R(1.5,1.5,21,21,'#fff','#111',2.2)+L('M5 12L10 18L20 5','#18a838',4.6),
csys:L('M3 4V21M3 21L22 15M3 12L18 5M9 3L19 20','#333',1.2)+L('M15 19L22 15','#d02020',1.6)+L('M13 4L20 8','#30a050',1.8),
extr:F('M2 5Q5 2 9 5Q12 2 15 5Q18 2 22 5V19Q18 16 15 19Q12 16 9 19Q5 16 2 19Z','url(#o)','#a05810',1)+L('M6 4V18M10 4V18M15 4V18M19 4V18','#a05810',1.1)+F('M2 19Q5 16 9 19Q12 16 15 19Q18 16 22 19V22Q18 19 15 22Q12 19 9 22Q5 19 2 22Z','#5070c0'),
cham:G('2,6 19,2 22,6 4,10','#8ac0f0','#404060',.8)+G('4,10 22,6 22,20 4,22','#f4e8d0','#a04020',1)+G('2,13 20,9 20,13 2,17','#f09030'),
t1:ycube(1,0,.55)+L('M15 9H24M6 13V22H12','#222')+ycube(11,12,.5),
t2:G('3,2 12,8 3,14','#1830a0')+G('23,2 14,8 23,14','#1830a0')+L('M13 1V25','#222',1).replace('/>',' stroke-dasharray="2 2"/>')+R(3,14,10,10,'#f4e040','#111')+G('14,13 25,24 14,24','#c01818'),
t3:R(2,3,12,8,'#e890c8','#a03080',.8)+E(8,3,6,2,'#f8c8e8','#a03080',.8)+L('M18 12H26M8 13V23H14','#333')+C(20,23,5,'none','#c02090',1.2)+C(20,23,2,'#c02090'),
t4:G('2,8 8,4 8,24 2,24','#f09020')+G('8,6 14,2 14,24 8,24','#40b040')+G('14,6 20,2 20,24 14,24','#e87828')+G('20,5 26,1 26,22 20,24','#3088e0'),
t5:C(10,17,9,'url(#bs)')+R(8.5,11,3,2.6,'#fff')+R(8.5,15,3,8,'#fff')+L('M8 5Q22 4 25 19M11 1Q26 1 28 16','#3078d8',2.6),
t6:doc('#fff','#555')+C(12,14,5.4,'#2f8ad0')+F('M9 12Q13 10 14 13Q13 17 10 16Z','#30a040'),
t7:C(13,13,11,'#e8f0fc','#667',1.2)+L('M13 5V14H20','#111',2),
t8:G('2,6 10,2 10,24 2,26','#f4f4f4','#888',1)+R(9,3,17,17,'#fff','#888',.7)+C(13,7,2.2,'#3070d0')+C(13,12,2.2,'#40b040')+C(13,17,2.2,'#d02020')+L('M17 7H24M17 12H24M17 17H24','#666'),
t9:`<linearGradient id="rb" x1="0" y1="0" x2="0" y2="1"><stop offset="0" stop-color="#e02010"/><stop offset=".25" stop-color="#f8d010"/><stop offset=".5" stop-color="#20d040"/><stop offset=".75" stop-color="#10c0e0"/><stop offset="1" stop-color="#1020e0"/></linearGradient>`+R(3,1,8,23,'url(#rb)')+L('M13 9L20 21','#111',3)+C(12,7,3,'#fff'),
t10:G('4,2 10,2 10,20 4,22','#4a88d8')+L('M4 6H10M4 10H10M4 14H10','#bfe0ff')+L('M12 7H25L17 13','#3a78d8',1.5)+L('M13 9L20 20','#111',3)+C(12,7,2.6,'#fff')+L('M1 23Q6 19 10 23','#a0a850'),
t11:C(18,7,5.5,'#e8a030')+F('M11 21L12 14H24L26 21Z','#2a9a3a')+C(8,13,5,'#7a5030')+C(8,14,3.8,'#f0c090')+F('M1 24L3 19H13L15 24Z','#8040c0'),
t12:G('2,6 10,2 10,24 2,26','#f4f4f4','#888',1)+R(9,3,17,17,'#fff','#888',.7)+R(11,5,13,4,'#c02020')+R(11,9,3,9,'#c02020')+R(21,9,3,9,'#c02020')+G('15,9 20,9 17.5,14','#3070d0'),
panel1:R(1,1,22,22,'#8a949c')+L('M5 6L18 19M5 12L13 19M12 5L19 12','#a8b0b8',1.2),
panel2:L('M2 6V2H6M18 2H22V6M2 18V22H6M18 22H22V18','#222',1.4)+R(5,5,14,14,'#3878c8','#222')+R(8,8,8,8,'#a8cef0'),
};
function def(tag,cls){customElements.define(tag,cls)}
class Base extends HTMLElement{sh(html){(this.shadowRoot||this.attachShadow({mode:'open'})).innerHTML=html;return this.shadowRoot}}

def('nx-icon',class extends Base{connectedCallback(){
 const n=this.getAttribute('name'),s=+this.getAttribute('size')||24,w=+this.getAttribute('vb')||24;
 const bx=this.hasAttribute('boxed');
 this.sh(`<style>:host{display:inline-flex;align-items:center;justify-content:center;flex:none;${bx?'background:#fff;border:1px solid #444;border-radius:3px;box-sizing:border-box;':''}}svg{display:block;overflow:visible}</style>
 <svg width="${s}" height="${s}" viewBox="0 0 ${w} ${w}">${DEFS}${I[n]||''}</svg>`);
}});

def('nx-toolbar',class extends Base{connectedCallback(){
 const h=+this.getAttribute('h')||33,bg=this.getAttribute('bg')||'linear-gradient(#e6e6e6,#c9c9c9)';
 const toks=this.getAttribute('items').trim().split(/\s+/);
 let px=0,out='';
 for(const t of toks){
  const at=t.lastIndexOf('@'),name=t.slice(0,at),x=+t.slice(at+1);
  let w,html;
  if(name=='g'){w=3;html=`<span class="g"></span>`}
  else if(name=='s'){w=2;html=`<span class="s"></span>`}
  else if(name=='v'){w=6;html=`<span class="v"></span>`}
  else if(name=='l'){w=6;html=`<span class="v l"></span>`}
  else if(name=='m'){w=7;html=`<span class="m">»</span>`}
  else if(name.startsWith('t=')){const [txt,ww,c]=name.slice(2).split(',');w=+ww;html=`<span class="t" style="width:${w}px;color:${c||'#222'}">${txt}</span>`}
  else if(name[0]=='#'){w=30;html=`<nx-icon name="${name.slice(1)}" boxed style="width:30px;height:${Math.min(h-4,29)}px"></nx-icon>`}
  else if(name[0]=='*'){w=23;html=`<nx-icon name="${name.slice(1)}" boxed size="20" style="width:23px;height:25px"></nx-icon>`}
  else {w=24;html=`<nx-icon name="${name}"></nx-icon>`}
  const ml=x-w/2-px; px=x+w/2;
  out+=`<span class="c" style="margin-left:${ml}px;width:${w}px">${html}</span>`;
 }
 this.sh(`<style>:host{display:flex;flex:none;height:${h}px;align-items:center;background:${bg};overflow:hidden;font:12px ${FF};box-sizing:border-box}
 .c{flex:none;display:flex;align-items:center;justify-content:center;height:100%;position:relative}
 .g{width:2px;height:24px;background:repeating-linear-gradient(#9a9a9a 0 2px,transparent 2px 4px)}
 .s{width:1px;height:100%;background:#f2f2f2;box-shadow:-1px 0 #bdbdbd}
 .v{width:0;height:0;border:3px solid transparent;border-top:4px solid #111;border-bottom:0}
 .l{margin-top:15px}
 .m{font:bold 12px ${FF};color:#111;margin-top:-12px}
 .t{white-space:nowrap;display:block;text-align:left;padding-bottom:2px}
 </style>${out}`);
}});

def('nx-title',class extends Base{connectedCallback(){this.sh(`<style>
 :host{display:flex;flex:none;height:22px;align-items:center;background:linear-gradient(#a0a0a0 0,#6a6a6a 4px,#3a3a3a 7px,#1a1a1a 8px,#191919 100%);color:#e8e8e8;font:13px ${FF};position:relative}
 .ic{margin-left:2px;margin-right:4px}
 .tx{padding-top:1px;letter-spacing:.15px}
 .sm{margin-left:auto;font:bold 13px "Liberation Sans",sans-serif;color:#f4f4f4;margin-right:27px;padding-top:3px;transform:scaleX(1.03)}
 .b{width:21px;height:20px;box-sizing:border-box;border:1px solid #555;border-top:0;border-radius:0 0 3px 3px;background:linear-gradient(#666,#222);margin-right:1px;display:flex;align-items:center;justify-content:center}
 .x{background:linear-gradient(#f08a70,#d83818);margin-right:0;border-color:#a33}
 svg{display:block}
 </style><nx-icon class="ic" name="start" size="18"></nx-icon><span class="tx">NX 8.5 - 建模 - [2014.7.27-2.prt （修改的）]</span><span class="sm">SIEMENS</span>
 <span class="b"><svg width="12" height="12"><rect x="2" y="8" width="7" height="3" fill="#eee"/></svg></span>
 <span class="b"><svg width="12" height="12"><path d="M4 1.5H10.5V8M1.5 4.5H8V10.5H1.5Z" fill="none" stroke="#eee" stroke-width="1.4"/></svg></span>
 <span class="b x"><svg width="14" height="14"><path d="M2 2L12 12M12 2L2 12" stroke="#fff" stroke-width="2.6"/></svg></span>`)}});

def('nx-menu',class extends Base{connectedCallback(){
 const m=[['文件(F)',30],['编辑(E)',80],['视图(V)',129],['插入(S)',181],['格式(R)',231],['工具(T)',282],['装配(A)',332],['信息(I)',384],['分析(L)',430],['首选项(P)',479],['窗口(O)',540],['GC 工具箱',592],['帮助(H)',662]];
 let px=0,o='';const W=[38,38,39,38,38,38,38,32,38,50,39,57,40];
 m.forEach((a,i)=>{o+=`<span style="margin-left:${a[1]-px}px;width:${W[i]}px">${a[0]}</span>`;px=a[1]+W[i]});
 this.sh(`<style>:host{display:flex;flex:none;height:27px;align-items:center;background:#e3e3e3;font:12px ${FF};color:#222;position:relative}
 span{flex:none;white-space:nowrap;overflow:visible;padding-bottom:2px;letter-spacing:-.25px}
 nx-icon{position:absolute;left:8px;top:5px}
 .g{position:absolute;left:6px;top:3px;width:2px;height:20px;background:repeating-linear-gradient(#a0a0a0 0 2px,transparent 2px 4px)}
 .mdi{position:absolute;top:5px;width:16px;height:17px;box-sizing:border-box;border:1px solid #8a8a8a;border-radius:3px;background:linear-gradient(#f4f4f4,#d4d4d4);display:flex;align-items:center;justify-content:center}
 </style><div class="g"></div><nx-icon name="nxm" size="16" style="left:9px"></nx-icon>${o}
 <div class="mdi" style="left:1860px"><svg width="10" height="10"><rect x="1" y="7" width="7" height="2" fill="#555"/></svg></div>
 <div class="mdi" style="left:1879px"><svg width="10" height="10"><path d="M3 1H9V7M1 3H7V9H1Z" fill="none" stroke="#555"/></svg></div>
 <div class="mdi" style="left:1898px"><svg width="10" height="10"><path d="M1 1L9 9M9 1L1 9" stroke="#333" stroke-width="1.6"/></svg></div>`)}});

def('nx-select',class extends Base{connectedCallback(){
 const w=this.getAttribute('w');
 this.sh(`<style>:host{display:flex;flex:none;width:${w}px;height:21px;box-sizing:border-box;border:1px solid #666;border-radius:3px;background:#fff;align-items:center;font:12px ${FF};color:#111;overflow:hidden}
 .t{flex:1;padding-left:1px;white-space:nowrap;padding-bottom:2px}
 .a{width:17px;height:100%;background:linear-gradient(#bcd0ec,#6a8ec0);display:flex;align-items:center;justify-content:center;border-left:1px solid #778}
 .a i{width:0;height:0;border:5px solid transparent;border-top:6px solid #1a2860;border-bottom:0}</style><span class="t"><slot></slot></span><span class="a"><i></i></span>`)}});

def('nx-row3',class extends Base{connectedCallback(){this.sh(`<style>:host{display:flex;flex:none;height:30px;align-items:center;background:linear-gradient(#d4d4d4,#e0e0e0);overflow:hidden}
 .s1{margin-left:6px}.s2{margin-left:9px}nx-toolbar{flex:1}</style>
 <nx-select class="s1" w="142">没有选择过滤器</nx-select><nx-select class="s2" w="149">整个装配</nx-select>
 <nx-toolbar h="30" bg="transparent" items="link@16 s@32 gfun@49 fil@69 v@82 cross@100 pipe@123 s@138 dashbox@152 v@169 s@179 sbox1@194 sbox2@216 s@231 *snap@245 snap2@267 *seg@292 *seg2@314 curv@340 umb@360 *ccir@384 cdot@406 *plusm@430 *seg@452 sph@475 s@490 mesh@504 v@1606"></nx-toolbar>`)}});

def('nx-cue',class extends Base{connectedCallback(){this.sh(`<style>:host{display:flex;flex:none;height:23px;align-items:center;background:#e0e0e0;border-bottom:1px solid #8a8a8a;box-sizing:border-box;font:bold 12px ${FF};color:#111;position:relative;letter-spacing:.85px}
 .a{width:910px;padding-left:3px;box-sizing:border-box;padding-bottom:2px}
 .b{flex:1;height:100%;display:flex;align-items:center;border-left:1px solid #f4f4f4;box-shadow:-1px 0 #c4c4c4;padding-left:2px;padding-bottom:2px;box-sizing:border-box}
 .sp{position:absolute;top:0;bottom:0;width:1px;background:#f6f6f6;box-shadow:-1px 0 #c4c4c4}
 nx-icon{position:absolute;top:3px}</style>
 <span class="a">选择对象并使用 MB3，或者双击某一对象</span><span class="b">当前特征：拉伸(6)</span><i class="sp" style="left:1822px"></i><i class="sp" style="left:1842px"></i>
 <nx-icon name="panel1" size="16" style="left:1881px"></nx-icon><nx-icon name="panel2" size="16" style="left:1901px"></nx-icon>`)}});

def('nx-tabs',class extends Base{connectedCallback(){
 const t=[['t1',17,40],['t2',3,38],['t3',2,43,1],['t4',1,39],['t5',15,40],['t6',13,41],['t7',13,40],['t8',3,39],['t9',2,40],['t10',2,40],['t11',2,40],['t12',2,40]];
 this.sh(`<style>:host{display:flex;flex-direction:column;flex:none;width:33px;background:#a9a9a9;box-sizing:border-box}
 .t{margin-left:7px;width:26px;box-sizing:border-box;background:#dcdcdc;border:1px solid #8a8a8a;border-right:0;border-radius:4px 0 0 4px;display:flex;align-items:center;justify-content:flex-start;padding-left:1px;overflow:hidden}
 .a{margin-left:4px;width:30px;background:#ececec;padding-left:4px;position:relative}
 </style>`+t.map(a=>`<div class="t ${a[3]?'a':''}" style="margin-top:${a[1]}px;height:${a[2]}px"><nx-icon name="${a[0]}" size="25" vb="26"></nx-icon></div>`).join(''))}});

def('nx-tree-row',class extends Base{connectedCallback(){
 const g=this.getAttribute('g')||'',box=this.getAttribute('box'),alt=this.hasAttribute('alt'),ic=(this.getAttribute('icons')||'').split(' ').filter(Boolean),pad=this.getAttribute('pad')||0;
 const sizes=this.getAttribute('sizes')?.split(' ')||[];
 let svg='';
 if(g)svg+=`<path d="${g}" fill="none" stroke="#888" stroke-dasharray="1 1"/>`;
 if(box)svg+=`<rect x="4.5" y="5.5" width="8" height="8" fill="#fff" stroke="#777"/><path d="M6.5 9.5H10.5${box=='+'?'M8.5 7.5V11.5':''}" stroke="#222"/>`;
 this.sh(`<style>:host{display:flex;flex:none;height:20px;box-sizing:border-box;position:relative;background:${alt?'#f5f5f5':'#fff'};border-bottom:1px solid #e4e4e4;font:12px ${FF};color:#333;align-items:center}
 svg.g{position:absolute;left:0;top:0}
 .c1{width:199px;box-sizing:border-box;height:100%;display:flex;align-items:center;padding-left:${pad}px;gap:2px;white-space:nowrap}
 .c2{flex:1;height:100%;border-left:1px solid #dcdcdc}
 .txt{position:relative;margin-left:${this.getAttribute('tg')||1}px;padding-bottom:2px}
 nx-icon{position:relative}</style>
 <svg class="g" width="80" height="20">${svg}</svg>
 <div class="c1">${ic.map((n,i)=>`<nx-icon name="${n}" size="${sizes[i]||14}"></nx-icon>`).join('')}<span class="txt"><slot></slot></span></div><div class="c2"></div>`)}});

def('nx-tree',class extends Base{connectedCallback(){
 let o='';for(let i=12;i<35;i++)o+=`<nx-tree-row ${i%2?'alt':''}></nx-tree-row>`;
 this.sh(`<style>:host{display:flex;flex-direction:column;flex:none;margin:5px 10px 0 10px;height:716px;box-sizing:border-box;border:1px solid #555;overflow:hidden;padding-right:3px;background:#efefef}
 .h{flex:none;height:20px;display:flex;background:linear-gradient(#f2f2f2,#d8d8d8);border-bottom:1px solid #888;box-sizing:border-box;font:12px ${FF};color:#333;align-items:center;position:relative}
 .h1{width:199px;padding-left:6px;padding-bottom:2px;box-sizing:border-box;display:flex;align-items:center;gap:18px}
 .h2{padding-left:5px;padding-bottom:2px;box-sizing:border-box;border-left:1px solid #bbb;height:100%;display:flex;align-items:center}
 i{width:0;height:0;border:5px solid transparent;border-bottom:5px solid #222;border-top:0;display:block}
 </style><div class="h"><span class="h1">名称<i></i></span><span class="h2">附注</span></div><slot></slot>${o}`)}});

def('nx-collapse',class extends Base{connectedCallback(){this.sh(`<style>:host{display:flex;flex:none;height:22px;margin:0 10px 1px 10px;box-sizing:border-box;background:linear-gradient(#f4f4f4 0,#f0f0f0 45%,#d4d4d4 55%,#d0d0d0 100%);border-bottom:1px solid #888;font:bold 12px ${FF};color:#222;align-items:center}
 .t{flex:1;padding-left:6px}.c{width:23px;height:100%;background:linear-gradient(#dedede,#bcbcbc);border-left:1px solid #888;display:flex;align-items:center;justify-content:center}</style>
 <span class="t"><slot></slot></span><span class="c"><svg width="13" height="10"><path d="M1.5 1.5L6.5 7L11.5 1.5" fill="none" stroke="#555" stroke-width="2.6"/></svg></span>`)}});

def('nx-nav',class extends Base{connectedCallback(){this.sh(`<style>:host{display:flex;flex-direction:column;flex:none;width:325px;box-sizing:border-box;background:#ebebeb;border-right:1px solid #777;box-shadow:inset 0 1px #fff;position:relative}
 .h{flex:none;height:27px;display:flex;align-items:center;font:bold 12px ${FF};color:#222;padding-left:12px;gap:10px;padding-top:3px;box-sizing:border-box}
 .sash{flex:none;height:13px;display:flex;align-items:center;gap:3px;margin:0 10px;justify-content:center}
 .sash i{flex:1;height:1px;background:#aaa;box-shadow:0 1px #fff}
 .sash b{width:52px;height:6px;background:linear-gradient(#eee,#bbb);border:1px solid #999;border-radius:2px}
 </style><div class="h"><nx-icon name="pin" size="16"></nx-icon>部件导航器</div><slot name="tree"></slot><div class="sash"><i></i><b></b><i></i></div><slot></slot>`)}});

const z8=p=>[860+p[0]/2.063,220+p[1]/3], z9=p=>[860+p[0]/2.063,600+p[1]/3], zh=p=>[890+p[0]/3,415+p[1]/3];
const spline=(pts,closed=true)=>{const n=pts.length;let d=`M${pts[0][0].toFixed(1)} ${pts[0][1].toFixed(1)}`;
 const g=i=>closed?pts[(i+n)%n]:pts[Math.max(0,Math.min(n-1,i))];
 for(let i=0;i<(closed?n:n-1);i++){const a=g(i-1),b=g(i),c=g(i+1),e=g(i+2);
  d+=`C${(b[0]+(c[0]-a[0])/6).toFixed(1)} ${(b[1]+(c[1]-a[1])/6).toFixed(1)} ${(c[0]-(e[0]-b[0])/6).toFixed(1)} ${(c[1]-(e[1]-b[1])/6).toFixed(1)} ${c[0].toFixed(1)} ${c[1].toFixed(1)}`}
 return d+(closed?'Z':'')};
const ellP=(deg,k=1)=>{const t=deg*Math.PI/180,th=10*Math.PI/180,a=372.5*k,b=311.5*k,cx=1240.5,cy=550.5;
 return [cx+a*Math.cos(t)*Math.cos(th)-b*Math.sin(t)*Math.sin(th),cy+a*Math.cos(t)*Math.sin(th)+b*Math.sin(t)*Math.cos(th)]};
def('nx-view',class extends Base{connectedCallback(){
 const rim=[];for(let d=0;d<360;d+=10)rim.push(ellP(d));
 const common=[[1355,400],[1330,450],[1280,505],[1210,545],[1160,562],[1135,585],[1080,610],[1025,617],[970,605],[920,575],[885,545],[870,510],[830,475],[780,410],[745,345]];
 const holeO=[[1030,42],[1130,55],[1220,90],[1300,160],[1350,240],[1368,320],...common,[736,290],[745,240],[780,170],[840,110],[920,65],[980,47]].map(zh);
 const holeT=[[736,290],[760,240],[800,190],[870,140],[960,110],[1040,102],[1090,105],[1170,130],[1250,170],[1310,240],[1345,300],[1362,350],...common].map(zh);
 const slotO=[[300,165],[350,185],[400,260],[500,360],[620,430],[750,462],[880,460],[1000,425],[1070,385],[1110,377],[1160,410],[1195,470],[1200,520],[1185,575],[1155,605],[1000,680],[820,708],[640,680],[450,580],[330,470],[245,365],[215,280],[240,195]].map(z9);
 const slotT=[[245,365],[290,320],[340,325],[380,365],[460,470],[560,545],[680,590],[780,605],[900,590],[1040,520],[1085,522],[1130,555],[1155,605],[1000,680],[820,708],[640,680],[450,580],[330,470]].map(z9);
 const wall=[ellP(157),z9([60,170]),[903,700],[943,763],[993,813],[1060,860],[1127,887],[1193,900],[1260,905],z9([1000,880]),[1442,850],[1518,786],[1566,725],ellP(15)];
 let wallBack='';for(let d=18;d<=155;d+=5){const p=ellP(d,.985);wallBack+=`L${p[0].toFixed(1)} ${p[1].toFixed(1)}`}
 const wallD=spline(wall,false)+wallBack+'Z';
 const smallDark=[[85,215],[66,180],[62,150],[90,95],[180,68],[270,95],[298,150],[285,195],[240,165],[180,157],[130,170]].map(zh);
 const smallThru=[[85,215],[130,170],[180,157],[240,165],[285,195],[265,235],[175,258],[110,240]].map(zh);
 const pt=p=>{const a=z8(p);return a[0].toFixed(1)+' '+a[1].toFixed(1)};
 const pts=a=>a.map(p=>z8(p).map(v=>v.toFixed(1)).join(',')).join(' ');
 const lab=(x,y,t,c)=>`<text x="${x}" y="${y}" fill="${c}" font-size="12" font-family="Liberation Sans,sans-serif" text-anchor="middle">${t}</text>`;
 this.sh(`<style>:host{display:block;flex:1;min-width:0;position:relative;background:linear-gradient(#adafb1,#bfc1c3 40%,#d2d3d4 64%,#e5e6e7 88%,#f0f0f1)}svg{display:block}</style>
 <svg width="1562" height="835" viewBox="358 170 1562 835">
 <defs>
 <linearGradient id="w" gradientUnits="userSpaceOnUse" x1="879" x2="1560" y1="0" y2="0"><stop offset="0" stop-color="#2a1a02"/><stop offset=".08" stop-color="#3a2404"/><stop offset=".17" stop-color="#4e3006"/><stop offset=".27" stop-color="#3a2404"/><stop offset=".38" stop-color="#170e00"/><stop offset=".7" stop-color="#171000"/><stop offset=".85" stop-color="#3a2503"/><stop offset="1" stop-color="#5a3c08"/></linearGradient>
 <linearGradient id="hw" gradientUnits="userSpaceOnUse" x1="1135" x2="1346" y1="0" y2="0"><stop offset="0" stop-color="#3a2304"/><stop offset=".3" stop-color="#1a0f00"/><stop offset=".5" stop-color="#1e1200"/><stop offset=".72" stop-color="#5a3808"/><stop offset=".9" stop-color="#1a0e00"/><stop offset="1" stop-color="#2a1a02"/></linearGradient>
 <linearGradient id="sw" gradientUnits="userSpaceOnUse" x1="964" x2="1442" y1="0" y2="0"><stop offset="0" stop-color="#1a0f00"/><stop offset=".1" stop-color="#1a0f00"/><stop offset=".17" stop-color="#4a2d06"/><stop offset=".3" stop-color="#4e3006"/><stop offset=".48" stop-color="#1a0e00"/><stop offset=".85" stop-color="#170e00"/><stop offset=".95" stop-color="#553607"/><stop offset="1" stop-color="#2a1a02"/></linearGradient>
 <linearGradient id="sh" gradientUnits="userSpaceOnUse" x1="901" x2="997" y1="0" y2="0"><stop offset="0" stop-color="#d08818"/><stop offset=".5" stop-color="#f4a820"/><stop offset="1" stop-color="#b87410"/></linearGradient>
 <linearGradient id="si" gradientUnits="userSpaceOnUse" x1="911" x2="988" y1="0" y2="0"><stop offset="0" stop-color="#2a1a02"/><stop offset=".45" stop-color="#150c00"/><stop offset=".8" stop-color="#6a4208"/><stop offset="1" stop-color="#2a1a02"/></linearGradient>
 </defs>
 <path d="${wallD}" fill="url(#w)"/>
 <path d="${spline(rim)} ${spline(holeO)} ${spline(slotO)}" fill="#ffff00" fill-rule="evenodd" stroke="#2a2a10" stroke-width=".7"/>
 <path d="${spline(holeO)} ${spline(holeT)}" fill="url(#hw)" fill-rule="evenodd"/>
 <path d="${spline(slotO)} ${spline(slotT)}" fill="url(#sw)" fill-rule="evenodd"/>
 <path d="M1377 728L1364 773M1432 790L1442 770" stroke="#7a6a48" stroke-width=".6"/>
 <ellipse cx="949" cy="464" rx="48" ry="39.5" fill="url(#sh)" stroke="#3a2a08" stroke-width=".8"/>
 <path d="${spline(smallDark)}" fill="url(#si)"/>
 <path d="${spline(smallThru)}" fill="#ffff00"/>
 <g stroke="#1010d0" fill="none" stroke-width="1.1">
 <path d="M${pt([767,1070])}L${pt([822,600])}"/>
 <path d="M${pt([780,884])}L${pt([1030,945])}" stroke-dasharray="14 1"/>
 <path d="M${pt([810,722])}L${pt([943,752])}L${pt([908,1025])}L${pt([775,990])}" stroke-dasharray="14 1"/>
 </g>
 <polygon points="${pts([[823,570],[830,607],[816,607]])}" fill="#0808b0"/>
 <polygon points="${pts([[1060,950],[1028,936],[1028,954]])}" fill="#0808b0"/>
 <ellipse cx="1231" cy="576" rx="3" ry="4.5" fill="#0808b0"/>
 ${lab(1262,409,'X','#4455b0')}${lab(1380,543,'Y','#2233a0')}${lab(1230,593,'Z','#1020c0')}
 <polygon points="428,916 455,921 450,957 425,951" fill="#cfd1d2" stroke="#a8aaab" stroke-width=".8"/>
 <path d="M427 930L453 935" stroke="#aaa"/>
 <path d="M423 938L431 900" stroke="#c84060" stroke-width="2.4"/><polygon points="433,896 427,912 435,914" fill="#c02040"/>
 <path d="M423 938L455 944" stroke="#20a030" stroke-width="2.6"/><polygon points="467,945 452,939 451,949" fill="#188030"/>
 <path d="M423 938L422 955" stroke="#2040a0" stroke-width="2.4"/><polygon points="422,961 418,951 426,951" fill="#2040a0"/>
 <circle cx="423" cy="938" r="3.2" fill="#eee" stroke="#999" stroke-width=".6"/>
 ${lab(433,900,'X','#c05060')}${lab(474,951,'Y','#50a060')}${lab(422,970,'Z','#4060c0')}
 </svg>`)}});

def('nx-stamp',class extends Base{connectedCallback(){this.sh(`<style>:host{display:block;position:absolute;left:10px;top:908px;width:122px;height:128px;pointer-events:none}svg{display:block}</style>
 <svg width="122" height="128" viewBox="0 0 122 128">
 <path fill-rule="evenodd" fill="#ee1010" d="M59 5C90 5 115 31 115 63C115 96 90 122 59 122C28 122 3 96 3 63C3 31 28 5 59 5ZM62.5 13C36 13 15 35 15 62C15 89 36 111 62.5 111C89 111 110 89 110 62C110 35 89 13 62.5 13Z"/>
 <path d="M88 13L100 20M112 42L116 52M113 78L117 70" stroke="#ee1010" stroke-width="2" fill="none"/>
 <circle cx="59" cy="26" r="6" fill="#ee1010"/>
 <polygon points="28,21 58,40 85,26 92,30 65,52 78,72 66,72 56,58 40,76 30,74 50,50" fill="#ee1010"/>
 <rect x="18" y="86" width="90" height="10" fill="#ee1010"/>
 <text x="25" y="81" font-family="Liberation Sans,sans-serif" font-weight="bold" font-size="15" fill="#ee1010" textLength="36" lengthAdjust="spacingAndGlyphs">UG</text>
 <text x="62" y="81" font-family="Noto Sans CJK SC,sans-serif" font-weight="bold" font-size="15" fill="#ee1010">爱好者</text>
 <text x="19" y="94.5" font-family="Liberation Sans,sans-serif" font-weight="bold" font-size="9.4" fill="#fff" textLength="88" lengthAdjust="spacingAndGlyphs">WWW.UGSNX.COM</text>
 </svg>`)}});

def('nx-app',class extends Base{connectedCallback(){
 const lv1=[['csys','基准坐标系 (0)'],['extr','拉伸 (1)'],['extr','拉伸 (2)'],['extr','拉伸 (3)'],['extr','拉伸 (4)'],['cham','倒斜角 (5)'],['extr','拉伸 (6)']];
 const rows=lv1.map((a,i)=>`<nx-tree-row ${i%2==1?'':'alt'} pad="40" icons="cbox ${a[0]}" sizes="13 16" tg="0" g="M29 0V${i==6?10:20}M29 10H40">${a[1]}</nx-tree-row>`).join('');
 this.sh(`<style>:host{display:flex;flex-direction:column;width:1920px;height:1040px;overflow:hidden;position:relative;font:12px ${FF}}
 .m{flex:1;display:flex;min-height:0}</style>
 <nx-title></nx-title><nx-menu></nx-menu>
 <nx-toolbar h="33" items="g@5 start@22 t=开始,24@50 v@68 new@90 open@121 save@152 s@171 cut@189 copy@220 paste@251 s@269 undo@288 redo@318 s@338 binoc@355 t=命令查找器,62@402 find@449 v@473 info@500 l@521 s@530 g@535 fit@552 v@575 shape@598 v@618 ball@640 v@661 oran@682 pane@713 v@735 blk@756 v@778 s@787 door1@805 door2@838 l@857 s@866 g@871 layers@890 wcs@920 v@942 s@950 wand@969 paint@999 s@1019 tridia@1038 v@1059 s@1069 hatch@1085 v@1109 ruler@1129 l@1150 s@1158 g@1164 #sphere@1182 redblue@1213 v@1235 redball@1256 v@1278 nobox@1298 v@1321 gradbox@1341 v@1364 #bulb@1385 #person@1417 #grid@1447 person2@1478 v@1500 circles@1520 v@1543 redbox@1564 v@1586 wrenchb@1607 l@1628 s@1637 g@1642 tri@1660 table@1690 fplus@1721 fcirc@1751 l@1774 s@1783 g@1788 plugok@1806 plugtree@1837 tabplug@1868 m@1912"></nx-toolbar>
 <nx-toolbar h="35" items="g@6 sketch@22 plane@54 v@76 extrude@96 revolve@129 bhole@159 bboss@190 bpock@220 bpad@252 emb@284 offs@314 slot@345 cyl@376 spring@407 s@427 trim@445 array@475 copyf@506 combine@538 v@559 trimb@580 edgeb@610 trbl@643 rhomb@673 boxcut@705 chair@734 s@754 sq3d@771 curved@803 curved2@834 slab@864 pyr@896 m@928 s@936 g@941 pmove@962 v@982 pdel@1003 v@1024 px@1044 pcopy@1076 v@1098 psplit@1118 v@1141 pdim@1162 v@1184 pbox@1205 ptri@1236 l@1257 s@1266 g@1272 srf1@1290 srf2@1320 srf3@1350 srf4@1381 gauge@1413 ribbon@1443 book@1475 v@1498 l@1509 s@1517 g@1522 frame@1540 layers@1571 layers@1602 s@1622 tag@1639 s@1659 chk1@1676 chk2@1707 chk3@1738 s@1757 abc@1773 l@1796 s@1805 g@1810 pr1@1828 pr2@1859 hand@1890 l@1912"></nx-toolbar>
 <nx-row3></nx-row3><nx-cue></nx-cue>
 <div class="m"><nx-tabs></nx-tabs>
 <nx-nav>
  <nx-tree slot="tree">
   <nx-tree-row pad="19" icons="clock" sizes="16" g="M9 0V20M9 10H19">历史记录模式</nx-tree-row>
   <nx-tree-row alt pad="19" icons="mview" sizes="16" g="M9 0V20M9 10H19" box="+">模型视图</nx-tree-row>
   <nx-tree-row pad="22" icons="check camera" sizes="12 16" g="M9 0V20M9 10H22" box="+" tg="1">摄像机</nx-tree-row>
   <nx-tree-row alt pad="19" icons="uexp" sizes="16" g="M9 0V20M9 10H19">用户表达式</nx-tree-row>
   <nx-tree-row pad="19" icons="fopen" sizes="16" g="M9 0V10M9 10H19" box="-">模型历史记录</nx-tree-row>
   ${rows}
  </nx-tree>
  <nx-collapse>相依性</nx-collapse><nx-collapse>细节</nx-collapse><nx-collapse>预览</nx-collapse>
 </nx-nav>
 <nx-view></nx-view></div>
 <nx-toolbar h="35" bg="linear-gradient(#e6e6e6,#c4c4c4)" items="g@5 yfind@23 cam@63 gray@97 ycadd@127 v@150 ycmove@172 mir@202 peril@232 s@252 wplus@270 y3@302 stair@333 s@350 hex@369 s@388 chain@406 weld@437 tree@468 sbox1@501 v@522 l@534 s@543 g@548 sqstar@566 flag@596 t=完成草图,50,#8a8a8a@637 spl@680 line@711 arc@742 circ@773 fil1@804 fil2@834 rect@866 poly@898 plusb@929 offc@959 v@981 s@990 gl1@1008 gl2@1040 gl3@1068 s@1088 dim@1107 v@1129 s@1138 pll@1156 pil@1187 tri2@1223 v@1240 s@1247 sqw@1266 gc1@1299 gc2@1327 l@1350 s@1358"></nx-toolbar>
 <nx-stamp></nx-stamp>`);
}});
</script>
</body></html>
